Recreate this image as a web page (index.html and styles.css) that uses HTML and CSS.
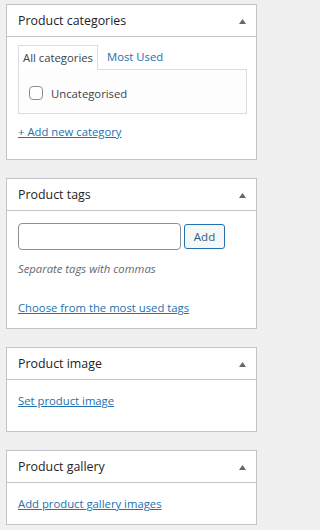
FILE: index.html
```html
<!DOCTYPE html>
<html lang="en">
<head>
<meta charset="utf-8">
<title>Product sidebar</title>
<link rel="stylesheet" href="styles.css">
</head>
<body>
<div class="wrap">
  <section class="box">
    <div class="box-head">
      <h2 class="box-title">Product categories</h2>
      <svg class="toggle" width="7" height="5" viewBox="0 0 7 5"><polygon points="3.5,0 7,5 0,5" fill="#646970"/></svg>
    </div>
    <div class="inside inside-cats">
      <ul class="tabs">
        <li class="tab tab-active">All categories</li>
        <li class="tab"><a href="#">Most Used</a></li>
      </ul>
      <div class="tabs-panel">
        <label class="cat-item"><span class="checkbox"></span>Uncategorised</label>
      </div>
      <a class="link add-cat" href="#">+ Add new category</a>
    </div>
  </section>

  <section class="box">
    <div class="box-head">
      <h2 class="box-title">Product tags</h2>
      <svg class="toggle" width="7" height="5" viewBox="0 0 7 5"><polygon points="3.5,0 7,5 0,5" fill="#646970"/></svg>
    </div>
    <div class="inside inside-tags">
      <div class="tag-row">
        <input class="tag-input" type="text" aria-label="Add new tag">
        <button class="button" type="button">Add</button>
      </div>
      <p class="howto">Separate tags with commas</p>
      <a class="link choose" href="#">Choose from the most used tags</a>
    </div>
  </section>

  <section class="box">
    <div class="box-head">
      <h2 class="box-title">Product image</h2>
      <svg class="toggle" width="7" height="5" viewBox="0 0 7 5"><polygon points="3.5,0 7,5 0,5" fill="#646970"/></svg>
    </div>
    <div class="inside inside-image">
      <a class="link" href="#">Set product image</a>
    </div>
  </section>

  <section class="box">
    <div class="box-head">
      <h2 class="box-title">Product gallery</h2>
      <svg class="toggle" width="7" height="5" viewBox="0 0 7 5"><polygon points="3.5,0 7,5 0,5" fill="#646970"/></svg>
    </div>
    <div class="inside inside-gallery">
      <a class="link" href="#">Add product gallery images</a>
    </div>
  </section>
</div>
</body>
</html>
```

FILE: styles.css
```css
html, body {
  margin: 0;
  padding: 0;
  background: #f0f0f1;
}

body {
  font-family: "Open Sans", "Noto Sans", sans-serif;
  font-size: 11.3px;
  color: #3c434a;
}

.wrap {
  display: flex;
  flex-direction: column;
  gap: 18px;
  padding: 4px 0 0 6px;
}

.box {
  width: 251px;
  box-sizing: border-box;
  border: 1px solid #c3c4c7;
  background: #fff;
}

.box-head {
  height: 31px;
  border-bottom: 1px solid #c3c4c7;
  display: flex;
  align-items: center;
  justify-content: space-between;
  padding: 0 10px 0 11px;
}

.box-title {
  margin: 0;
  font-size: 12.4px;
  font-weight: 500;
  color: #1d2327;
  line-height: 16px;
}

.toggle {
  display: block;
  margin-top: 1px;
}

.inside {
  padding-left: 11px;
  padding-right: 9px;
}

.link {
  display: block;
  color: #2271b1;
  text-decoration: underline;
  line-height: 16px;
  width: max-content;
}

/* categories */
.inside-cats {
  padding-top: 8px;
  padding-bottom: 19px;
}

.tabs {
  display: flex;
  margin: 0;
  padding: 0;
  list-style: none;
  height: 24px;
}

.tab {
  height: 24px;
  line-height: 24px;
  box-sizing: border-box;
  padding: 0 9px;
}

.tab a {
  color: #2271b1;
  text-decoration: none;
}

.tab-active {
  position: relative;
  z-index: 1;
  height: 25px;
  padding: 0 4px 0 4px;
  width: 80px;
  border: 1px solid #dcdcde;
  border-bottom: none;
  background: #fff;
  color: #3c434a;
  line-height: 23px;
}

.tabs-panel {
  height: 45px;
  box-sizing: border-box;
  border: 1px solid #dcdcde;
  background: #fdfdfd;
  display: flex;
  align-items: center;
  padding: 0 0 0 10px;
}

.cat-item {
  display: flex;
  align-items: center;
  gap: 8px;
  color: #3c434a;
  margin-top: 3px;
}

.checkbox {
  width: 14px;
  height: 14px;
  box-sizing: border-box;
  border: 1px solid #8c8f94;
  border-radius: 4px;
  background: #fff;
}

.add-cat {
  margin-top: 10px;
}

/* tags */
.inside-tags {
  padding-top: 12px;
  padding-bottom: 12px;
}

.tag-row {
  display: flex;
  align-items: flex-start;
  gap: 3px;
}

.tag-input {
  width: 163px;
  height: 27px;
  box-sizing: border-box;
  margin: 0;
  border: 1px solid #8c8f94;
  border-radius: 4px;
  background: #fff;
  padding: 0 6px;
  font: inherit;
}

.button {
  width: 41px;
  height: 25px;
  box-sizing: border-box;
  margin: 1px 0 0;
  padding: 0;
  border: 1px solid #2271b1;
  border-radius: 3px;
  background: #f6f7f7;
  color: #2c5e86;
  font: inherit;
  font-size: 11.5px;
  line-height: 23px;
}

.howto {
  margin: 11px 0 0;
  line-height: 16px;
  font-style: italic;
  color: #646970;
}

.choose {
  margin-top: 23px;
}

/* image / gallery */
.inside-image {
  padding-top: 13px;
  padding-bottom: 22px;
}

.inside-gallery {
  padding-top: 13px;
  padding-bottom: 12px;
}
```
